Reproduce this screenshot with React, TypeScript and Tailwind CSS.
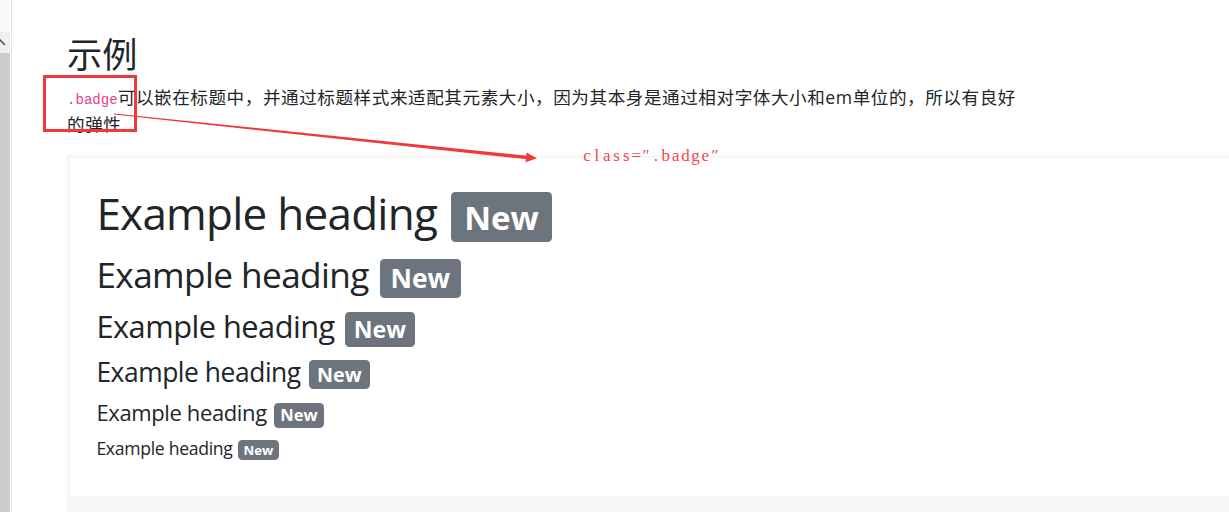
import React from "react";

const FONT = { fontFamily: '"Open Sans", "Noto Sans CJK SC", sans-serif' };

function Badge() {
  return (
    <span className="ml-[0.1em] inline-block whitespace-nowrap rounded-[4.4px] bg-[#6c757d] px-[0.4em] py-[0.25em] align-baseline text-[75%] font-bold leading-none tracking-normal text-white">
      New
    </span>
  );
}

const ANNOT = ["c", "l", "a", "s", "s", "=", "″", ".", "b", "a", "d", "g", "e", "″"];

export default function App() {
  const headings: { cls: string; Tag: "h1" | "h2" | "h3" | "h4" | "h5" | "h6" }[] = [
    { cls: "text-[44px] mb-[11.5px]", Tag: "h1" },
    { cls: "text-[35.2px] mb-[9.8px]", Tag: "h2" },
    { cls: "text-[30.8px] mb-[9.8px]", Tag: "h3" },
    { cls: "text-[26.4px] mb-[9.8px]", Tag: "h4" },
    { cls: "text-[22px] mb-[9.8px]", Tag: "h5" },
    { cls: "text-[17.6px] mb-[9.8px]", Tag: "h6" },
  ];
  return (
    <div className="relative flex h-[512px] w-[1229px] overflow-hidden bg-white text-[#212529]" style={FONT}>
      {/* left scrollbar strip */}
      <div className="flex w-[10px] flex-col bg-[#fafafa]">
        <div className="h-[32px]" />
        <div className="flex h-[21px] items-start bg-[#efefef]">
          <svg width="10" height="21" viewBox="0 0 10 21">
            <polyline points="-5,13 0,8 5,13" fill="none" stroke="#5a5a5a" strokeWidth="1.6" />
          </svg>
        </div>
        <div className="flex-1 bg-[#cdcdcd]" />
      </div>
      <div className="w-px bg-white" />
      <div className="w-px bg-[#e3e3e3]" />

      <main className="min-w-0 flex-1 pl-[55px] pt-[33px]">
        <h2 className="mb-[8.8px] text-[35.2px] font-normal leading-[1.2]">示例</h2>
        <p className="mb-[17.6px] whitespace-nowrap text-[17.6px] leading-[1.5] tracking-[0.55px]">
          <code className="text-[14.1px] tracking-normal text-[#e83e8c]" style={{ fontFamily: '"Liberation Mono", monospace' }}>
            .badge
          </code>
          可以嵌在标题中，并通过标题样式来适配其元素大小，因为其本身是通过相对字体大小和em单位的，所以有良好
          <br />
          的弹性.
        </p>

        <div className="w-[1200px] border-l-[3.5px] border-t-[3.5px] border-[#f7f7f8] px-[26.4px] pb-[26.4px] pt-[28.4px]">
          {headings.map(({ cls, Tag }, i) => (
            <Tag key={i} className={`${cls} font-normal leading-[1.2] tracking-[-0.017em]`}>
              Example heading <Badge />
            </Tag>
          ))}
        </div>
        <div className="h-[40px] w-[1200px] bg-[#f6f6f8]" />
      </main>

      {/* annotation overlay */}
      <svg className="pointer-events-none absolute left-0 top-0" width="1229" height="512" viewBox="0 0 1229 512">
        <rect x="44.5" y="76.5" width="91" height="54" fill="none" stroke="#f03a3a" strokeWidth="3" />
        <polygon points="114,113.4 114,114.6 527.3,159.3 527.7,155.7" fill="#f03a3a" />
        <polygon points="526.5,152.5 537,158.3 525.5,162.3" fill="#f03a3a" />
      </svg>
      <div
        className="pointer-events-none absolute left-[582px] top-[146px] flex text-[17px] leading-[20px] text-[#f04848]"
        style={{ fontFamily: '"Liberation Serif", "DejaVu Serif", serif' }}
      >
        {ANNOT.map((c, i) => (
          <span key={i} className="inline-block w-[9.86px] text-center">
            {c}
          </span>
        ))}
      </div>
    </div>
  );
}
